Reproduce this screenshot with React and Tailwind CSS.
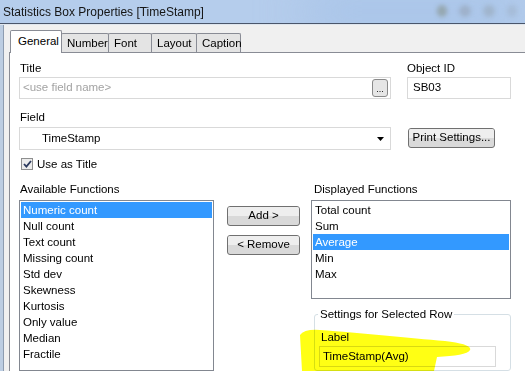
const availableFns = ['Numeric count', 'Null count', 'Text count', 'Missing count', 'Std dev', 'Skewness', 'Kurtosis', 'Only value', 'Median', 'Fractile'];
const displayedFns = ['Total count', 'Sum', 'Average', 'Min', 'Max'];

const tabs = [
  { label: 'General', w: 'w-[52px]', active: true },
  { label: 'Number', w: 'w-[48px]' },
  { label: 'Font', w: 'w-[44px]' },
  { label: 'Layout', w: 'w-[46px]' },
  { label: 'Caption', w: 'w-[45px]' },
];

const ListBox = ({ items, selected, className }) => (
  <div className={`border border-[#828790] bg-white pt-px ${className}`}>
    {items.map((item) => (
      <div
        key={item}
        className={`mx-px h-[16px] pl-[2px] leading-[16px] ${item === selected ? 'bg-[#3399ff] text-white' : 'text-black'}`}
      >
        {item}
      </div>
    ))}
  </div>
);

const Button = ({ children, className }) => (
  <div
    className={`flex flex-col overflow-hidden rounded-[3px] border border-[#707070] bg-[#d9d9d9] text-black ${className}`}
  >
    <div className="relative flex h-full items-center justify-center">
      <div className="absolute inset-x-0 top-0 h-1/2 bg-[#eeeeee]" />
      <span className="relative">{children}</span>
    </div>
  </div>
);

export default function App() {
  return (
    <div className="relative flex h-[371px] w-[525px] flex-col overflow-hidden bg-[#f0f0f0] font-['Liberation_Sans',Arial,sans-serif] text-[11.5px] text-black">
      {/* title bar */}
      <div className="relative flex h-[23px] shrink-0 items-center overflow-hidden bg-[#b5cdec] pl-[3px]">
        <div className="absolute inset-y-0 right-0 w-[220px] bg-[#9ebde6] blur-[24px]" />
        <span className="relative text-[12px] text-[#151515]">Statistics Box Properties [TimeStamp]</span>
        <div className="absolute right-[8px] top-[5px] flex gap-[12px] blur-[2px]">
          <div className="h-[12px] w-[10px] rounded-full bg-[#7f8a7a]/50" />
          <div className="h-[12px] w-[12px] rounded-full bg-[#8f9aa6]/45" />
          <div className="h-[12px] w-[12px] rounded-full bg-[#8f9aa6]/40" />
          <div className="h-[12px] w-[10px] rounded-full bg-[#8f9aa6]/25" />
        </div>
      </div>
      <div className="h-[2px] shrink-0 border-t border-[#4a566b] bg-[#dfe6ee]" />

      <div className="flex min-h-0 flex-1">
        <div className="w-[3px] bg-[#bccde2]" />
        <div className="w-px bg-[#8d9cb0]" />
        <div className="flex flex-1 flex-col pl-[5px]">
          {/* tabs */}
          <div className="flex h-[27px] shrink-0 items-end pl-px">
            {tabs.map((t, i) => (
              <div
                key={t.label}
                className={`${t.w} ${i > 0 ? '-ml-px' : ''} ${
                  t.active
                    ? 'relative z-10 -mb-px h-[23px] bg-white pl-[7px] pt-[4px]'
                    : 'h-[19px] bg-[#e4e4e4] pl-[5px] pt-[3px]'
                } rounded-t-[2px] border border-b-0 border-[#898c95] leading-[13px]`}
              >
                {t.label}
              </div>
            ))}
          </div>

          {/* panel */}
          <div className="flex flex-1 flex-col border-l border-t border-[#898c95] bg-white pl-[9px]">
            <div className="mt-[8px] flex gap-[16px]">
              <div className="flex w-[372px] flex-col">
                <span className="ml-px leading-[14px]">Title</span>
                <div className="mt-[2px] flex h-[22px] items-center justify-between border border-[#d9d9d9] pl-[3px] pr-[2px]">
                  <span className="text-[#a3a3a3]">&lt;use field name&gt;</span>
                  <div className="flex h-[18px] w-[16px] items-end justify-center rounded-[3px] border border-[#8a8a8a] bg-[#e6e6e6] pb-[2px] text-[9px] leading-[9px]">
                    ...
                  </div>
                </div>
              </div>
              <div className="flex w-[104px] flex-col">
                <span className="leading-[14px]">Object ID</span>
                <div className="mt-[2px] flex h-[22px] items-center border border-[#d9d9d9] pl-[5px]">SB03</div>
              </div>
            </div>

            <span className="ml-px mt-[11px] leading-[14px]">Field</span>
            <div className="mt-[3px] flex gap-[17px]">
              <div className="flex h-[23px] w-[372px] items-center justify-between border border-[#d9d9d9] pl-[22px] pr-[6px]">
                <span>TimeStamp</span>
                <svg width="7" height="4" viewBox="0 0 7 4">
                  <path d="M0 0h7L3.5 4z" fill="#000" />
                </svg>
              </div>
              <Button className="mt-px h-[20px] w-[87px]">Print Settings...</Button>
            </div>

            <div className="mt-[7px] flex h-[14px] items-center gap-[4px] pl-[2px]">
              <div className="flex h-[12px] w-[12px] items-center justify-center border border-[#8e8f8f] bg-[#ececec]">
                <svg width="9" height="8" viewBox="0 0 9 8">
                  <path d="M1 4l2.4 2.6L8 1" fill="none" stroke="#2c3a5e" strokeWidth="1.8" />
                </svg>
              </div>
              <span className="leading-[14px]">Use as Title</span>
            </div>

            <div className="mt-[11px] flex">
              <span className="ml-px w-[292px] leading-[14px]">Available Functions</span>
              <span className="ml-[2px] leading-[14px]">Displayed Functions</span>
            </div>

            <div className="mt-[4px] flex flex-1">
              <ListBox items={availableFns} selected="Numeric count" className="w-[195px]" />
              <div className="ml-[13px] flex w-[73px] flex-col gap-[9px] pt-[6px]">
                <Button className="h-[20px]">Add &gt;</Button>
                <Button className="h-[20px]">&lt; Remove</Button>
              </div>
              <div className="ml-[11px] flex w-[200px] flex-col">
                <ListBox items={displayedFns} selected="Average" className="h-[99px]" />
                <div className="relative ml-[3px] mt-[15px] flex-1 rounded-[3px] border border-[#d5dfe5] pl-[4px] pr-[14px]">
                  <span className="absolute -top-[8px] left-[3px] bg-white px-[2px] leading-[14px]">Settings for Selected Row</span>
                  <div className="mt-[15px] pl-[2px] leading-[14px]">Label</div>
                  <div className="mt-[2px] flex h-[21px] items-center border border-[#d9d9d9] pl-[3px]">TimeStamp(Avg)</div>
                </div>
              </div>
            </div>
          </div>
        </div>
      </div>

      {/* highlighter stroke */}
      <svg className="pointer-events-none absolute left-0 top-0 mix-blend-multiply" width="525" height="371" viewBox="0 0 525 371">
        <path
          d="M300 335 Q304 329 320 330 C360 333 410 338 445 341 C462 343 472 346 470 350 C468 354 455 356 437 357 L434 371 L302 371 Z"
          fill="#ffff14"
        />
      </svg>
    </div>
  );
}
